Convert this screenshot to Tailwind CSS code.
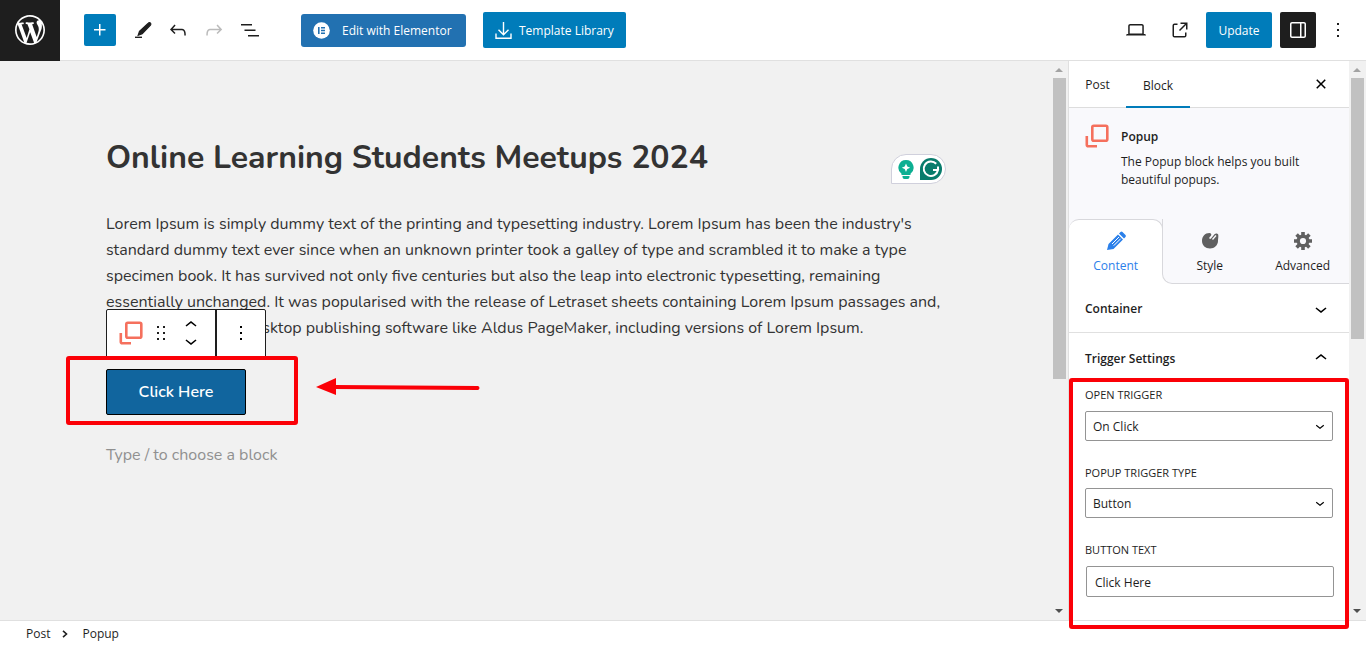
<!DOCTYPE html>
<html lang="en">
<head>
<meta charset="utf-8">
<meta name="viewport" content="width=device-width, initial-scale=1">
<title>Edit Post</title>
<script src="https://cdn.jsdelivr.net/npm/@tailwindcss/browser@4"></script>
</head>
<body class="flex h-screen flex-col overflow-hidden bg-white font-['Segoe_UI','Open_Sans',sans-serif] text-[12px] text-[#1e1e1e]">
<svg class="hidden">
  <symbol id="down" viewBox="0 0 24 24"><path d="M17.5 11.6L12 16l-5.5-4.4.9-1.2L12 14l4.5-3.6 1 1.2z"/></symbol>
  <symbol id="up" viewBox="0 0 24 24"><path d="M6.5 12.4L12 8l5.5 4.4-.9 1.2L12 10l-4.5 3.6-1-1.2z"/></symbol>
  <symbol id="more" viewBox="0 0 24 24"><path d="M13 19h-2v-2h2v2zm0-6h-2v-2h2v2zm0-6h-2V5h2v2z"/></symbol>
  <symbol id="popup" viewBox="0 0 24 24"><g fill="none" stroke="#f5705d" stroke-width="2.6"><rect x="7.3" y="1.8" width="15" height="15" rx="1.5"/><path d="M1.8 12v8.7a1.5 1.5 0 0 0 1.5 1.5H12"/></g></symbol>
</svg>

<header class="flex h-[61px] shrink-0 items-center border-b border-[#e0e0e0]">
  <a href="#" aria-label="View Posts" class="flex h-[61px] w-[60px] items-center justify-center bg-[#1e1e1e]">
    <svg class="size-9" viewBox="-2 -2 24 24" fill="#fff"><path d="M20 10c0-5.51-4.49-10-10-10C4.48 0 0 4.49 0 10c0 5.52 4.48 10 10 10 5.51 0 10-4.48 10-10zM7.78 15.37L4.37 6.22c.55-.02 1.17-.08 1.17-.08.5-.06.44-1.13-.06-1.11 0 0-1.45.11-2.37.11-.18 0-.37 0-.58-.01C4.12 2.69 6.87 1.11 10 1.11c2.33 0 4.45.87 6.05 2.34-.68-.11-1.65.39-1.65 1.58 0 .74.45 1.36.9 2.1.35.61.55 1.36.55 2.46 0 1.49-1.4 5-1.4 5l-3.03-8.37c.54-.02.82-.17.82-.17.5-.05.44-1.25-.06-1.22 0 0-1.44.12-2.38.12-.87 0-2.33-.12-2.33-.12-.5-.03-.56 1.2-.06 1.22l.92.08 1.26 3.41zM17.41 10c.24-.64.74-1.87.43-4.25.7 1.29 1.05 2.71 1.05 4.25 0 3.29-1.73 6.24-4.4 7.78.97-2.59 1.94-5.2 2.92-7.78zM6.1 18.09C3.12 16.65 1.11 13.53 1.11 10c0-1.3.23-2.48.72-3.59C3.25 10.3 4.67 14.2 6.1 18.09zm4.03-6.63l2.58 6.98c-.86.29-1.76.45-2.71.45-.79 0-1.57-.11-2.29-.33.81-2.38 1.62-4.74 2.42-7.1z"/></svg>
  </a>
  <button aria-label="Add block" class="ml-6 flex size-8 items-center justify-center rounded-xs bg-[#007cba]"><svg class="size-6" viewBox="0 0 24 24" fill="#fff"><path d="M11 12.5V17.5H12.5V12.5H17.5V11H12.5V6H11V11H6V12.5H11Z"/></svg></button>
  <div class="ml-[14px] flex gap-3">
    <button aria-label="Tools" class="size-6"><svg viewBox="0 0 24 24"><path d="M18.300 5.200c.7-.7 1.700-.6 2.200 0s.5 1.300 0 1.900l-8.300 8.600-4 1.500 1.300-3.900z" fill="#1e1e1e" stroke="#1e1e1e" stroke-width="1.200"/><path d="M5 18.600h7V20H5z" fill="#1e1e1e"/></svg></button>
    <button aria-label="Undo" class="size-6"><svg viewBox="0 0 24 24" fill="#1e1e1e"><path d="M18.3 11.7c-.6-.6-1.4-.9-2.3-.9H6.7l2.9-3.3-1.1-1-4.5 5L8.5 16l1-1-2.7-2.7H16c.5 0 .9.2 1.3.5 1 1 1 3.4 1 4.5v.3h1.5v-.2c0-1.5 0-4.3-1.5-5.7z"/></svg></button>
    <button aria-label="Redo" disabled class="size-6"><svg viewBox="0 0 24 24" fill="#bbb"><path d="M15.6 6.5l-1.1 1 2.9 3.3H8c-.9 0-1.7.3-2.3.9-1.4 1.5-1.4 4.2-1.4 5.6v.2h1.5v-.3c0-1.1 0-3.5 1-4.5.3-.3.7-.5 1.3-.5h9.2L14.5 15l1.1 1.1 4.6-4.6-4.6-5z"/></svg></button>
    <button aria-label="Document overview" class="size-6"><svg viewBox="0 0 24 24" fill="#1e1e1e"><path d="M3 6h11v1.5H3V6Zm3.5 5.5h11V13h-11v-1.5ZM21 17H10v1.5h11V17Z"/></svg></button>
  </div>
  <button class="ml-[39px] flex h-[33px] w-[165px] items-center gap-3 rounded-[3px] bg-[#2271b1] pl-[12px] whitespace-nowrap text-white">
    <svg class="size-[17px]" viewBox="0 0 17 17"><circle cx="8.500" cy="8.500" r="8.300" fill="#fff"/><path d="M5 5h1.600v7H5zM8 5h4v1.400H8zM8 7.800h4v1.400H8zM8 10.600h4V12H8z" fill="#2271b1"/></svg>
    <span class="pt-[2px]">Edit with Elementor</span></button>
  <button class="ml-[17px] flex h-9 w-[143px] items-center gap-[7px] rounded-xs bg-[#007cba] pl-3 whitespace-nowrap text-white">
    <svg class="size-[17px]" viewBox="0 0 17 17" fill="none" stroke="#fff" stroke-width="1.400"><path d="M8.500 0v12.500M3.500 7.800l5 4.900 5-4.900M1 11.500v4.800h15v-4.800"/></svg>
    <span class="pt-[2px]">Template Library</span></button>
  <div class="ml-auto flex items-center pr-4">
    <button aria-label="View" class="mr-5 size-6"><svg viewBox="0 0 24 24" fill="#1e1e1e"><path d="M20.500 16h-.7V8c0-1.100-.9-2-2-2H6.200c-1.100 0-2 .9-2 2v8h-.7c-.8 0-1.500.7-1.500 1.500h20c0-.8-.7-1.500-1.500-1.500zM5.700 8c0-.3.2-.5.5-.5h11.600c.3 0 .5.2.5.5v7.600H5.700V8z"/></svg></button>
    <button aria-label="View post" class="mr-[14px] size-6"><svg viewBox="0 0 24 24" fill="#1e1e1e"><path d="M19.500 4.500h-7V6h4.440l-5.970 5.970 1.060 1.060L18 7.060v4.440h1.500v-7Zm-13 1a2 2 0 0 0-2 2v10a2 2 0 0 0 2 2h10a2 2 0 0 0 2-2v-3H17v3a.5.5 0 0 1-.5.5h-10a.5.5 0 0 1-.5-.5v-10a.5.5 0 0 1 .5-.5h3V5.500h-3Z"/></svg></button>
    <button class="mr-2 h-9 w-[66px] rounded-xs bg-[#007cba] pt-[2px] text-white">Update</button>
    <button aria-label="Settings" class="mr-[10px] flex size-9 items-center justify-center rounded-xs bg-[#1e1e1e]"><svg class="size-6" viewBox="0 0 24 24" fill="#fff"><path d="M18 4H6c-1.100 0-2 .9-2 2v12c0 1.100.9 2 2 2h12c1.100 0 2-.9 2-2V6c0-1.100-.9-2-2-2zm-4 14.500H6c-.3 0-.5-.2-.5-.5V6c0-.3.2-.5.5-.5h8v13zm4.500-.5c0 .3-.2.5-.5.5h-2.500v-13H18c.3 0 .5.2.5.5v12z"/></svg></button>
    <button aria-label="Options" class="size-6"><svg viewBox="0 0 24 24" fill="#1e1e1e"><use href="#more"/></svg></button>
  </div>
</header>

<div class="flex min-h-0 flex-1">
  <main class="min-w-0 flex-1 bg-[#f1f1f1] pt-[76px] pl-[106px] font-['Nunito','Open_Sans',sans-serif] text-[#333]">
    <div class="relative w-[840px]">
      <h1 class="text-[32px] leading-[42px] font-bold whitespace-nowrap">Online Learning Students Meetups 2024</h1>
      <div class="absolute top-[17px] right-0 flex h-[30px] w-[55px] items-center gap-[6px] rounded-[15px] rounded-bl-none border border-[#d0d0dc] bg-white pl-[6px]">
        <svg class="h-[19px] w-4" viewBox="0 0 16 19"><path d="M8 0a7.600 7.600 0 0 1 4.500 13.700V15h-9v-1.300A7.600 7.600 0 0 1 8 0zM4.500 16h7v1a2 2 0 0 1-2 2h-3a2 2 0 0 1-2-2z" fill="#0daf92"/><path d="M8 3.500l1.300 2.900 2.900 1.300L9.300 9 8 11.900 6.700 9 3.800 7.700l2.900-1.300z" fill="#fff"/></svg>
        <svg class="size-[22px]" viewBox="0 0 22 22"><path d="M0 22V11a11 11 0 1 1 11 11z" fill="#087c6c"/><path d="M16.200 5.800A7.200 7.200 0 1 0 18 12h-5M18 8.500V12" fill="none" stroke="#fff" stroke-width="2"/></svg>
      </div>
    </div>
    <p class="mt-8 text-[16px] leading-[26px] whitespace-nowrap">Lorem Ipsum is simply dummy text of the printing and typesetting industry. Lorem Ipsum has been the industry's<br>standard dummy text ever since when an unknown printer took a galley of type and scrambled it to make a type<br>specimen book. It has survived not only five centuries but also the leap into electronic typesetting, remaining<br>essentially unchanged. It was popularised with the release of Letraset sheets containing Lorem Ipsum passages and,<br>more recently with desktop publishing software like Aldus PageMaker, including versions of Lorem Ipsum.</p>
    <div class="relative mt-7 w-[140px]">
      <button class="h-[46px] w-full rounded-xs border border-black bg-[#11659e] text-[16px] font-semibold text-white">Click Here</button>
      <div class="absolute -top-[60px] left-0 flex h-[49px] w-[160px] rounded-t-xs border border-[#1e1e1e] bg-white pb-[2px]">
        <button aria-label="Popup" class="ml-3 w-6"><svg class="size-6" viewBox="0 0 24 24"><use href="#popup"/></svg></button>
        <button aria-label="Drag" class="ml-[6px] w-6"><svg class="size-6" viewBox="0 0 24 24" fill="#1e1e1e"><path d="M8 7h2V5H8v2zm0 6h2v-2H8v2zm0 6h2v-2H8v2zm6-14v2h2V5h-2zm0 8h2v-2h-2v2zm0 6h2v-2h-2v2z"/></svg></button>
        <div class="ml-[6px] flex w-6 flex-col justify-center">
          <button aria-label="Move up" class="flex h-4 items-center overflow-hidden"><svg class="size-6 shrink-0"><use href="#up"/></svg></button>
          <button aria-label="Move down" class="flex h-4 items-center overflow-hidden"><svg class="size-6 shrink-0"><use href="#down"/></svg></button>
        </div>
        <button aria-label="Options" class="-mb-[2px] ml-3 flex flex-1 items-center justify-center border-l-2 border-[#1e1e1e] pb-[2px]"><svg class="size-6"><use href="#more"/></svg></button>
      </div>
      <div class="absolute -top-[13px] -left-[40px] h-[69px] w-[232px] rounded-[3px] border-4 border-[#fb0007]"></div>
      <svg class="absolute top-[9px] left-[210px] h-[18px] w-[164px]" viewBox="0 0 164 18"><path d="M18 9l143.500 1" stroke="#fb0007" stroke-width="4" stroke-linecap="round"/><path d="M0 9L20 0v17z" fill="#fb0007"/></svg>
    </div>
    <p class="mt-[27px] text-[16px] leading-[26px] text-[#909090]">Type / to choose a block</p>
  </main>

  <div class="flex w-[17px] shrink-0 flex-col items-center bg-[#f1f1f1]" aria-hidden="true">
    <svg class="h-[17px] w-[17px]" viewBox="0 0 17 17"><path d="M4 11l4-4 4 4z" fill="#a3a3a3"/></svg>
    <div class="h-[301px] w-[13px] bg-[#c1c1c1]"></div>
    <svg class="mt-auto h-[17px] w-[17px]" viewBox="0 0 17 17"><path d="M4 6l4 4 4-4z" fill="#505050"/></svg>
  </div>

  <aside class="relative flex w-[281px] shrink-0 flex-col border-l border-[#e0e0e0] bg-white">
    <div class="flex h-[47px] shrink-0 items-stretch border-b border-[#ddd] pr-4">
      <button class="w-[57px] pt-[2px]">Post</button>
      <button class="-mb-px w-16 border-b-2 border-[#007cba] pt-1">Block</button>
      <button aria-label="Close" class="ml-auto flex w-6 items-center"><svg class="size-6" viewBox="0 0 24 24"><path d="M12 13.060l3.712 3.713 1.061-1.060L13.061 12l3.712-3.712-1.060-1.060L12 10.938 8.288 7.227l-1.061 1.060L10.939 12l-3.712 3.712 1.060 1.061L12 13.061z"/></svg></button>
    </div>
    <div class="flex h-[111px] shrink-0 gap-3 bg-[#f9f9fc] pt-4 pl-4">
      <svg class="size-6 shrink-0"><use href="#popup"/></svg>
      <div>
        <h2 class="mt-1 leading-[18px] font-semibold">Popup</h2>
        <p class="mt-[7px] leading-[18px] whitespace-nowrap">The Popup block helps you built<br>beautiful popups.</p>
      </div>
    </div>
    <div class="grid h-[65px] shrink-0 grid-cols-3 bg-[#f9f9fc]">
      <button class="-mr-px flex flex-col items-center gap-1 rounded-t-[10px] border-t border-r border-[#d8d8dc] bg-white pt-[9px] text-[#2b80ea]">
        <svg class="size-6" viewBox="0 0 24 24"><path d="M3 21l1.500-6L14 5.500l5 5L9.500 20zM15 4.500l1.500-1.500a1.500 1.500 0 0 1 2 0L21.500 6a1.500 1.500 0 0 1 0 2L20 9.500z" fill="#2b80ea"/><path d="M8 15l7-7M9.700 16.700l7-7" stroke="#fff" stroke-width="1"/></svg>Content</button>
      <div class="col-span-2 bg-white"><div class="grid h-full grid-cols-2 rounded-bl-[10px] border-b border-l border-[#d8d8dc] bg-[#f9f9fc]">
        <button class="flex flex-col items-center gap-1 pt-[10px]"><svg class="size-6" viewBox="0 0 24 24"><path d="M11.500 4C7 4 4 7.500 4 12s3.500 7.500 8 7.500c4.500 0 8-3.500 8-7.500 0-2 .5-3.500.3-6C20 4.500 18 4 16.500 5.200L13 9.500c-.8.8-2 .3-1.700-.8.3-1 1.700-1.300 2-2.700C13.500 4.700 12.500 4 11.500 4z" fill="#606060"/><path d="M14.500 10.500l3.500-4" stroke="#f9f9fc" stroke-width="1.300"/></svg>Style</button>
        <button class="flex flex-col items-center gap-1 pt-[10px]"><svg class="size-6" viewBox="0 0 24 24"><g stroke="#606060" stroke-width="3.600"><path d="M12 3v18M3 12h18M5.600 5.600l12.800 12.800M18.400 5.600L5.600 18.400"/></g><circle cx="12" cy="12" r="6.500" fill="#606060"/><circle cx="12" cy="12" r="3.100" fill="#f9f9fc"/></svg>Advanced</button>
      </div></div>
    </div>
    <button class="flex h-[49px] shrink-0 items-center justify-between border-b border-[#e0e0e0] px-4 pt-[2px] font-semibold">Container<svg class="size-6"><use href="#down"/></svg></button>
    <button class="flex h-[49px] shrink-0 items-center justify-between px-4 font-semibold"><span class="pt-[2px]">Trigger Settings</span><svg class="size-6"><use href="#up"/></svg></button>
    <form class="flex flex-col gap-6 px-4 pt-[5px]">
      <div>
        <label for="open" class="block text-[11px] leading-4 font-medium uppercase">Open Trigger</label>
        <div class="relative mt-2"><select id="open" class="h-[30px] w-full appearance-none rounded-xs border border-[#949494] bg-white px-[7px] pt-[2px]"><option>On Click</option></select><svg class="pointer-events-none absolute top-[6px] right-1 size-[18px]"><use href="#down"/></svg></div>
      </div>
      <div>
        <label for="type" class="block text-[11px] leading-4 font-medium uppercase">Popup Trigger Type</label>
        <div class="relative mt-[7px]"><select id="type" class="h-[30px] w-full appearance-none rounded-xs border border-[#949494] bg-white px-[7px] pt-[2px]"><option>Button</option></select><svg class="pointer-events-none absolute top-[6px] right-1 size-[18px]"><use href="#down"/></svg></div>
      </div>
      <div>
        <label for="text" class="block text-[11px] leading-4 font-medium uppercase">Button Text</label>
        <input id="text" value="Click Here" class="mt-2 ml-px h-[31px] w-full rounded-xs border border-[#949494] bg-white px-2 pt-[2px]">
      </div>
    </form>
    <div class="pointer-events-none absolute top-[317px] right-0 left-0 z-10 h-[251px] rounded-[3px] border-4 border-[#fb0007]"></div>
  </aside>

  <div class="flex w-[17px] shrink-0 flex-col items-center bg-[#f1f1f1]" aria-hidden="true">
    <svg class="h-[17px] w-[17px]" viewBox="0 0 17 17"><path d="M4 11l4-4 4 4z" fill="#a3a3a3"/></svg>
    <div class="h-[261px] w-[13px] bg-[#c1c1c1]"></div>
    <svg class="mt-auto h-[17px] w-[17px]" viewBox="0 0 17 17"><path d="M4 6l4 4 4-4z" fill="#505050"/></svg>
  </div>
</div>

<footer class="flex h-[25px] shrink-0 items-center gap-3 border-t border-[#e0e0e0] pt-[2px] pl-[26px]">
  <a href="#">Post</a>
  <svg class="h-2 w-[6px]" viewBox="0 0 6 8" fill="none" stroke="#1e1e1e" stroke-width="1.600"><path d="M1 .8L4.500 4 1 7.200"/></svg>
  <a href="#" class="ml-[2px]">Popup</a>
</footer>
</body>
</html>
